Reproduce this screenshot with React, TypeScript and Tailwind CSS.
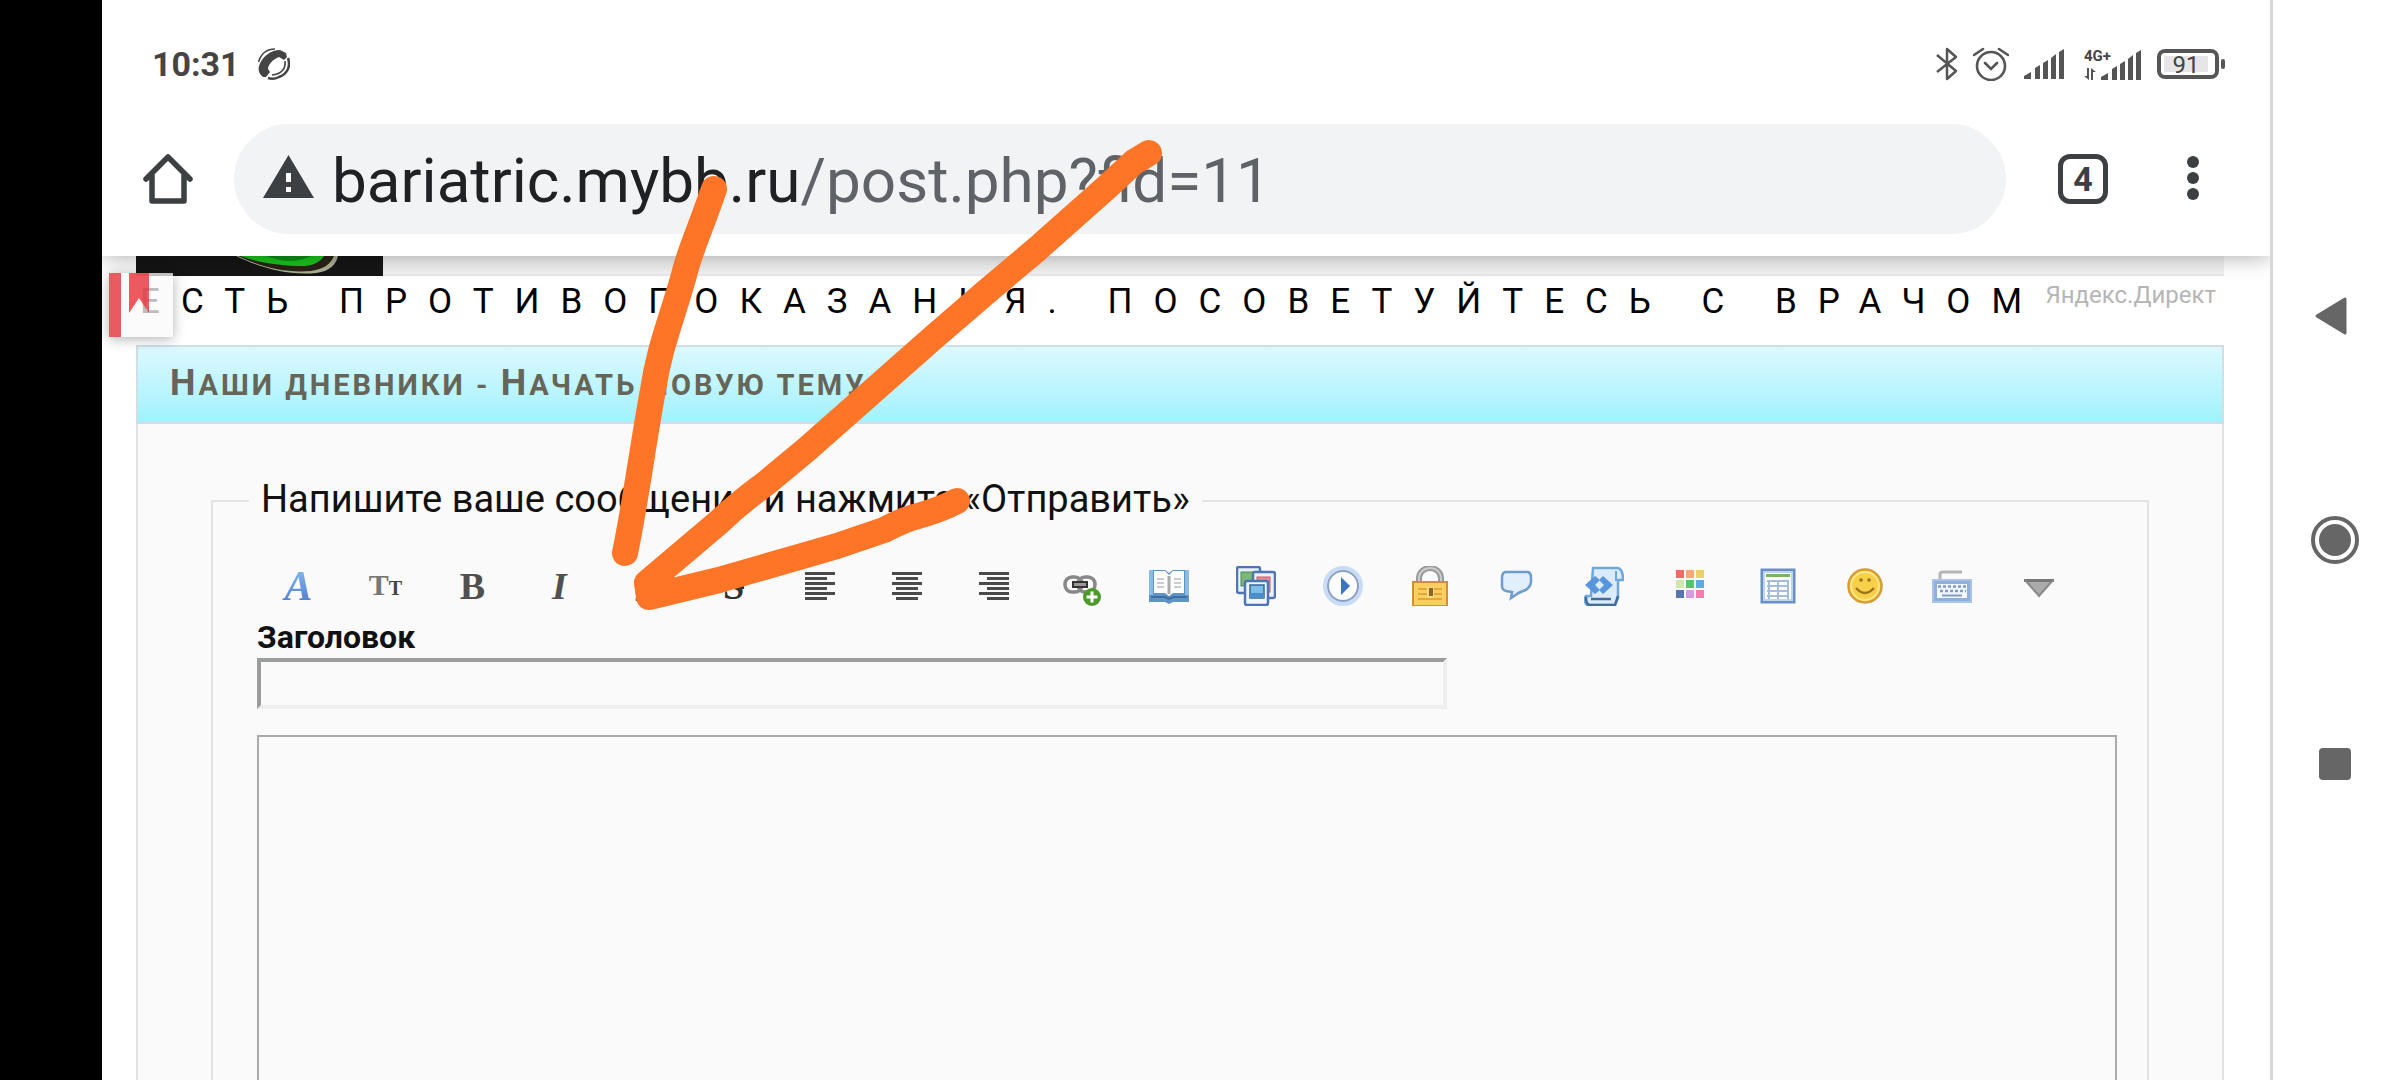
import type { ReactNode } from 'react';

function SignalBars() {
  return (
    <svg className="h-[30px] w-10" viewBox="0 0 40 30" fill="#555">
      <path d="M0 30v-3l7-4v7zM11 30V19l5-3v14zM19 30V14l5-3v19zM27 30V9l5-4v25zM35 30V3l5-3v30z" />
    </svg>
  );
}

function StatusBar() {
  return (
    <header className="relative z-20 flex h-[124px] shrink-0 items-center bg-white pt-1 pr-[45px] pl-[50px] text-[#444]">
      <div className="flex items-center gap-[18px]">
        <time className="text-[34px] leading-10 font-bold">10:31</time>
        <svg className="h-8 w-8" viewBox="0 0 32 32" fill="none">
          <path
            d="M22 2L28 5 29 9 26 12 21 9C15 11 10 17 10 21L12 24 8 29 5 29C1 26 0 22 1 18C4 9 12 2 22 2z"
            fill="#444"
          />
          <path d="M0.500 14C3 6 9 1 17 1" stroke="#444" strokeWidth="1.600" />
          <path d="M30 10c3 9-1 16-9 19-4 2-8 2-11 1" stroke="#444" strokeWidth="2.500" />
          <path d="M27 13c1 7-3 13-13 14" stroke="#444" strokeWidth="1.600" />
        </svg>
      </div>
      <div className="ml-auto flex items-center gap-4">
        <div className="flex items-center gap-[15px]">
          <svg className="h-[34px] w-[22px]" viewBox="0 0 22 34" fill="none" stroke="#555" strokeWidth="2.5">
            <path d="M1 8l19 16-9 8V2l9 8L1 25" strokeLinejoin="round" />
          </svg>
          <svg className="h-[34px] w-9" viewBox="0 0 36 34" fill="none" stroke="#555" strokeWidth="2.6">
            <circle cx="18" cy="19" r="14" />
            <path d="M12 16l6 6 6-6M1 8l9-6M35 8l-9-6" strokeLinecap="round" />
          </svg>
          <SignalBars />
        </div>
        <div className="ml-1 flex items-end">
          <div className="-mr-2.5 flex flex-col gap-1">
            <span className="text-[15px] leading-4 font-bold">4G+</span>
            <svg className="h-3 w-3" viewBox="0 0 12 12" fill="#555">
              <path d="M3 0h2v12L0 8h3zM7 12h2V4h3L7 0z" />
            </svg>
          </div>
          <SignalBars />
        </div>
        <div className="flex items-center gap-0.5">
          <div className="h-[30px] w-[62px] rounded-lg border-4 border-[#555] p-[3px]">
            <div className="flex h-4 w-11 items-center justify-center bg-[#e6e6e6] pt-0.5 text-[24px] leading-none">
              91
            </div>
          </div>
          <div className="h-2.5 w-1 rounded-sm bg-[#555]" />
        </div>
      </div>
    </header>
  );
}

function AddressBar() {
  return (
    <div className="relative z-10 flex h-[132px] shrink-0 items-start bg-white pr-[71px] pl-[41px] shadow-[0_2px_20px_rgba(0,0,0,0.3)]">
      <button aria-label="Home" className="mt-[30px] h-[50px] w-[50px]">
        <svg viewBox="0 0 50 50" fill="none" stroke="#3c4043" strokeWidth="5.5" strokeLinejoin="round" strokeLinecap="round">
          <path d="M3 25L25 3l22 22M9 21v26h32V21" />
        </svg>
      </button>
      <div className="ml-[41px] flex h-[110px] flex-1 items-center rounded-full bg-[#f1f3f4] pl-[29px]">
        <svg className="mb-1.5 h-[43px] w-[51px] shrink-0" viewBox="0 0 51 43">
          <path d="M25.500 0L51 43H0z" fill="#3c4043" />
          <path d="M23 18h5v9h-5zM23 32h5v5h-5z" fill="#fff" />
        </svg>
        <span className="ml-[18px] pt-1 text-[62px] leading-[72px] whitespace-nowrap text-[#202124]">
          bariatric.mybb.ru<span className="text-[#5f6368]">/post.php?fid=11</span>
        </span>
      </div>
      <button className="mt-[30px] ml-[52px] flex h-[50px] w-[50px] items-center justify-center rounded-xl border-[5px] border-[#3c4043] text-[34px] leading-none font-bold text-[#3c4043]">
        4
      </button>
      <button aria-label="Menu" className="mt-8 ml-[79px] flex flex-col gap-1">
        <span className="h-3 w-3 rounded-full bg-[#3c4043]" />
        <span className="h-3 w-3 rounded-full bg-[#3c4043]" />
        <span className="h-3 w-3 rounded-full bg-[#3c4043]" />
      </button>
    </div>
  );
}

function Lines({ x, short }: { x: number; short: number }) {
  return (
    <svg className="h-10 w-10" viewBox="0 0 40 40" fill="#4a4a4a">
      {[6, 16, 26].map(y => (
        <g key={y}>
          <rect x="4" y={y} width="30" height="3" />
          <rect x={x} y={y + 5} width={short} height="3" />
        </g>
      ))}
    </svg>
  );
}

function Icon({ children }: { children: ReactNode }) {
  return (
    <svg className="h-10 w-10" viewBox="0 0 40 40" fill="none">
      {children}
    </svg>
  );
}

const SWATCHES = ['#f26a6a', '#f7a877', '#ecd06c', '#cfe8b0', '#57c46c', '#5faae4', '#5876ad', '#d69bdc', '#f77bb0'];

const TOOLS: { name: string; icon: ReactNode }[] = [
  {
    name: 'Шрифт',
    icon: (
      <span className="bg-linear-to-b from-[#86bdf0] to-[#5078cc] bg-clip-text px-1 font-['Liberation_Serif',serif] text-[42px] leading-10 font-bold text-transparent italic">
        A
      </span>
    ),
  },
  {
    name: 'Размер',
    icon: (
      <span className="font-['Liberation_Serif',serif] text-[30px] leading-10 font-bold text-[#777]">
        T<span className="text-[20px] text-[#444]">T</span>
      </span>
    ),
  },
  {
    name: 'Жирный',
    icon: <span className="font-['Liberation_Serif',serif] text-[38px] leading-10 font-bold text-[#505050]">B</span>,
  },
  {
    name: 'Курсив',
    icon: <span className="font-['Liberation_Serif',serif] text-[38px] leading-10 font-bold text-[#505050] italic">I</span>,
  },
  {
    name: 'Подчеркнутый',
    icon: <span className="font-['Liberation_Serif',serif] text-[30px] leading-10 text-[#505050] underline">U</span>,
  },
  {
    name: 'Зачеркнутый',
    icon: <span className="font-['Liberation_Serif',serif] text-[38px] leading-10 font-bold text-[#333] line-through">S</span>,
  },
  { name: 'По левому краю', icon: <Lines x={4} short={22} /> },
  { name: 'По центру', icon: <Lines x={8} short={22} /> },
  { name: 'По правому краю', icon: <Lines x={12} short={22} /> },
  {
    name: 'Ссылка',
    icon: (
      <Icon>
        <rect x="3" y="11" width="17" height="15" rx="7" stroke="#888" strokeWidth="3.500" />
        <rect x="16" y="11" width="17" height="15" rx="7" stroke="#888" strokeWidth="3.500" />
        <path d="M11 16h14v5H11z" fill="#999" stroke="#333" strokeWidth="2" />
        <circle cx="30" cy="31" r="9" fill="#4c9a2a" />
        <path d="M30 25.500v11M24.500 31h11" stroke="#fff" strokeWidth="3" />
      </Icon>
    ),
  },
  {
    name: 'Картинка',
    icon: (
      <Icon>
        <path d="M0 4h16l4 3 4-3h16v32H24l-4 2-4-2H0z" fill="#5f93c4" />
        <path d="M0 4h4v25H0zM36 4h4v25h-4z" fill="#8cbce4" />
        <path d="M5 5h11l4 4 4-4h11v22H24l-4 3-4-3H5z" fill="#fdfdfd" />
        <path d="M20 10v18" stroke="#aaa" strokeWidth="3" />
        <path d="M8 13h7M8 17h7M8 21h7M25 13h7M25 17h7M25 21h7" stroke="#ccc" strokeWidth="2" />
        <path d="M2 31h14l4 2 4-2h14" stroke="#3f6da3" strokeWidth="2" />
      </Icon>
    ),
  },
  {
    name: 'Изображения',
    icon: (
      <Icon>
        <rect x="1" y="1" width="23" height="26" rx="2" fill="#e8f1fc" stroke="#4f76b3" strokeWidth="2.500" />
        <rect x="5" y="6" width="13" height="14" fill="#7cb877" stroke="#4c8a55" />
        <rect x="17" y="6" width="22" height="26" rx="2" fill="#e8f1fc" stroke="#4f76b3" strokeWidth="2.500" />
        <rect x="21" y="11" width="13" height="15" fill="#e98a92" stroke="#c95a68" />
        <rect x="9" y="15" width="23" height="24" rx="2" fill="#eef5fd" stroke="#4f76b3" strokeWidth="2.500" />
        <rect x="14" y="19" width="14" height="13" fill="#7dbdea" stroke="#3a6596" strokeWidth="1.500" />
        <path d="M14 27h14v5H14z" fill="#4a8ecb" />
      </Icon>
    ),
  },
  {
    name: 'Видео',
    icon: (
      <Icon>
        <circle cx="20" cy="20" r="18" fill="#fbfcff" stroke="#c8dcf5" strokeWidth="4" />
        <circle cx="20" cy="20" r="15" stroke="#8b9fc0" strokeWidth="2" />
        <path d="M18 11l9 9-9 9z" fill="#3f72c0" />
      </Icon>
    ),
  },
  {
    name: 'Скрытый текст',
    icon: (
      <Icon>
        <path d="M9 18v-6a11 10 0 0 1 22 0v6" stroke="#999" strokeWidth="6" />
        <path d="M9 17v-5a11 10 0 0 1 22 0v5" stroke="#ccc" strokeWidth="2" />
        <rect x="3" y="16" width="34" height="24" fill="#f9cf62" stroke="#d18e35" strokeWidth="2" />
        <path d="M8 23h24M8 28h24M8 33h24" stroke="#e5a63a" strokeWidth="2" />
        <path d="M17 21h7v11h-7z" fill="#fbd97f" />
        <path d="M19 22h4v8h-4z" fill="#8a6428" />
      </Icon>
    ),
  },
  {
    name: 'Цитата',
    icon: (
      <Icon>
        <path
          d="M8 6h23q3 1 3 5v5q-1 7-8 9-5 2-6 3l-6 4 1-6-6-1q-4-1-4-5v-8q0-5 3-6z"
          fill="#e1effd"
          stroke="#6f9ccc"
          strokeWidth="2.500"
        />
      </Icon>
    ),
  },
  {
    name: 'Код',
    icon: (
      <Icon>
        <path d="M9 2h25q5 1 5 12h-5v18l-3 7H3q-4-5-1-9h5z" fill="#dcebfc" stroke="#6ea7da" strokeWidth="2.500" />
        <path d="M2 31q0 8 4 8h25l3-9M7 33h20" stroke="#456d9c" strokeWidth="2.500" />
        <path d="M11 10L1 19l10 9 5-4-5-5 5-5zM19 10l10 9-10 9-4-4 5-5-5-5z" fill="#5795dc" />
        <path d="M32 5v9h5" stroke="#6ea7da" strokeWidth="2" />
      </Icon>
    ),
  },
  {
    name: 'Цвет текста',
    icon: (
      <Icon>
        {SWATCHES.map((color, i) => (
          <rect key={color} x={5 + (i % 3) * 10} y={4 + Math.floor(i / 3) * 10} width="8" height="8" fill={color} />
        ))}
      </Icon>
    ),
  },
  {
    name: 'Таблица',
    icon: (
      <Icon>
        <rect x="4" y="4" width="32" height="32" fill="#fff" stroke="#6a8fc4" strokeWidth="3" />
        <rect x="6" y="6" width="28" height="28" stroke="#bcd5f2" strokeWidth="2" />
        <path d="M8 9.500h24" stroke="#79b560" strokeWidth="3" />
        <path d="M9 15h22M9 20h22M9 25h22M9 30h22M11 15v18M20 15v18M30 15v18" stroke="#a5bcdc" strokeWidth="2" />
      </Icon>
    ),
  },
  {
    name: 'Смайлы',
    icon: (
      <Icon>
        <circle cx="20" cy="20" r="16.500" fill="#f6d047" stroke="#d69e32" strokeWidth="2.500" />
        <circle cx="20" cy="20" r="14" stroke="#fbe58c" strokeWidth="2" />
        <path d="M11 22q9 10 18 0" stroke="#9b7420" strokeWidth="2.500" />
        <circle cx="16" cy="14" r="1.800" fill="#9b7420" />
        <circle cx="24" cy="14" r="1.800" fill="#9b7420" />
      </Icon>
    ),
  },
  {
    name: 'Клавиатура',
    icon: (
      <Icon>
        <path d="M8 14V8q0-2 3-2h19" stroke="#b5b5b5" strokeWidth="3" />
        <rect x="1" y="14" width="38" height="22" fill="#8fb0dc" stroke="#a9c4e8" strokeWidth="2" />
        <rect x="5" y="18" width="30" height="14" fill="#f4f8ff" />
        <path d="M6 20.500h28M8 25h26" stroke="#7d9ccc" strokeWidth="2.500" strokeDasharray="3 2" />
        <path d="M10 29.500h20" stroke="#7d9ccc" strokeWidth="2" />
      </Icon>
    ),
  },
  {
    name: 'Ещё',
    icon: (
      <Icon>
        <path d="M6 14h28L20 30z" fill="#aaa" />
        <path d="M5 14.500h30" stroke="#777" strokeWidth="3" />
        <path d="M6 14l14 16 14-16" stroke="#888" strokeWidth="2" />
      </Icon>
    ),
  },
];

function PostForm() {
  return (
    <form className="flex flex-1 flex-col border-x-2 border-[#e2e4e4] bg-[#fafafa] px-[73px] pt-[53px]">
      <fieldset className="flex min-w-0 flex-1 flex-col border-2 border-b-0 border-[#e4e4e4] pr-[30px] pl-[44px]">
        <legend className="-ml-2 px-3 pb-1 text-[38px] leading-[44px] text-[#111]">
          Напишите ваше сообщение и нажмите «Отправить»
        </legend>
        <div className="mt-[41px] -ml-0.5 flex">
          {TOOLS.map(tool => (
            <button
              key={tool.name}
              type="button"
              title={tool.name}
              className="flex h-10 w-[87px] items-center justify-center"
            >
              {tool.icon}
            </button>
          ))}
        </div>
        <label htmlFor="subject" className="mt-3 mb-0.5 text-[32px] leading-[38px] font-bold text-[#111]">
          Заголовок
        </label>
        <input
          id="subject"
          type="text"
          className="h-[51px] w-16/25 border-4 border-t-[#9a9c9b] border-r-[#eee] border-b-[#eee] border-l-[#9a9c9b] bg-transparent px-2 text-[32px] outline-none"
        />
        <textarea
          aria-label="Сообщение"
          className="mt-[26px] flex-1 resize-none border-2 border-b-0 border-[#aaa] bg-transparent p-3 text-[32px] outline-none"
        />
      </fieldset>
    </form>
  );
}

function ForumPage() {
  return (
    <main className="relative flex flex-1 flex-col pr-[46px] pl-[34px]">
      <div className="h-5 shrink-0 border-b-2 border-[#e8e8e8] bg-[#f1f1f1]">
        <svg className="h-5 w-[247px]" viewBox="0 0 247 20">
          <path d="M0 0h247v20H0z" fill="#151515" />
          <path d="M100 0c20 10 50 20 80 17 15-2 20-9 22-17z" fill="#a9b193" />
          <path d="M102 0c25 12 48 17 73 15 14-2 20-8 23-15z" fill="#2a2317" />
          <path d="M104 0c20 7 40 10 65 10 10-1 16-5 19-10z" fill="#19c51c" />
          <path d="M130 0q25 10 45 0z" fill="#0e8f18" />
        </svg>
      </div>
      <div className="flex h-[69px] shrink-0 items-start justify-between whitespace-nowrap">
        <p className="-mr-[21px] pt-[5px] pl-1 text-[35px] leading-[42px] tracking-[21px] text-black">
          ЕСТЬ ПРОТИВОПОКАЗАНИЯ. ПОСОВЕТУЙТЕСЬ С ВРАЧОМ
        </p>
        <a href="#direct" className="pt-1 pr-2 text-[24px] leading-[30px] text-[#b5b5b5]">
          Яндекс.Директ
        </a>
      </div>
      <h1 className="flex h-[79px] shrink-0 items-center border-2 border-[#cfdfe3] bg-linear-to-b from-[#dcf8ff] to-[#a0f2fe] pb-0.5 pl-8 text-[29px] leading-10 font-bold tracking-[3px] text-[#666558] uppercase">
        <span>
          <span className="text-[36px]">Н</span>аши дневники - <span className="text-[36px]">Н</span>ачать новую тему
        </span>
      </h1>
      <PostForm />
      <button
        aria-label="Закладки"
        className="absolute top-[17px] left-[7px] z-20 flex h-16 w-16 bg-[#fafafa]/75 shadow-[0_2px_12px_rgba(0,0,0,0.3)]"
      >
        <span className="h-16 w-3 bg-[#ea5b60]" />
        <svg className="ml-2 h-10 w-5" viewBox="0 0 20 40">
          <path d="M0 0h20v40L10 25 0 40z" fill="#e63238" fillOpacity="0.800" />
        </svg>
      </button>
    </main>
  );
}

function NavigationBar() {
  return (
    <nav className="relative z-20 flex w-[130px] shrink-0 flex-col items-center border-l-[3px] border-[#d8d8d8] bg-white pt-[296px] pr-1">
      <button aria-label="Back" className="h-10 w-12">
        <svg className="h-10 w-12" viewBox="0 0 48 40">
          <path d="M6 20L34 3v34z" fill="#666" stroke="#666" strokeWidth="3" strokeLinejoin="round" />
        </svg>
      </button>
      <button aria-label="Home screen" className="mt-[180px] h-12 w-12 rounded-full border-4 border-[#666] p-1">
        <span className="block h-8 w-8 rounded-full bg-[#666]" />
      </button>
      <button aria-label="Recent apps" className="mt-[184px] h-8 w-8 rounded-sm bg-[#666]" />
    </nav>
  );
}

// Freehand marker strokes drawn over the whole screen
function MarkerArrow() {
  return (
    <svg
      className="pointer-events-none absolute top-0 left-0 z-30 h-[1080px] w-[2400px]"
      viewBox="0 0 2400 1080"
      fill="none"
      stroke="#ff7527"
      strokeWidth="26"
      strokeLinecap="round"
      strokeLinejoin="round"
    >
      <path d="M714 189C700 230 690 250 684 275C670 325 660 345 653 390C642 450 636 500 625 553" />
      <path d="M1149 153L1134 162L1107 187L1036 250L985 293L934 337L857 405L806 450L765 484Q740 502 719 522L647 583L649 597L719 580L837 546L884 530Q905 519 918 516Q940 510 957 501" />
    </svg>
  );
}

export default function App() {
  return (
    <div className="relative flex h-screen overflow-hidden bg-white font-[Roboto,sans-serif]">
      <div className="relative z-20 w-[102px] shrink-0 bg-black" />
      <div className="flex min-w-0 flex-1 flex-col">
        <StatusBar />
        <AddressBar />
        <ForumPage />
      </div>
      <NavigationBar />
      <MarkerArrow />
    </div>
  );
}
